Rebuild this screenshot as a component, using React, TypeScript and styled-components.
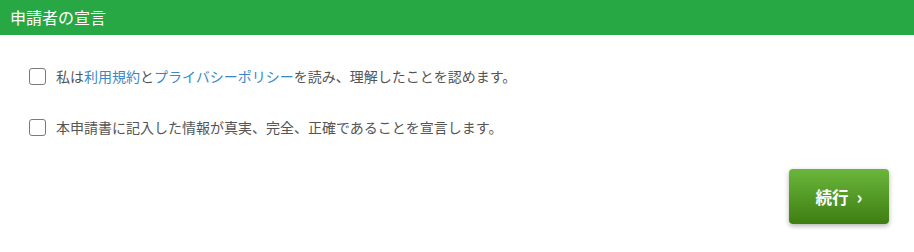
import React from "react";
import styled, { createGlobalStyle } from "styled-components";

const Global = createGlobalStyle`
  html, body { margin: 0; padding: 0; background: #fff; }
  body { font-family: "Noto Sans CJK JP", "Noto Sans", sans-serif; }
`;

const Panel = styled.section`
  width: 914px;
  height: 252px;
  display: flex;
  flex-direction: column;
  background: #fff;
`;

const Header = styled.header`
  height: 35px;
  background: #28a745;
  color: #fff;
  font-size: 16px;
  line-height: 35px;
  padding: 0 10px;
  box-sizing: border-box;
`;

const Body = styled.div`
  display: flex;
  flex-direction: column;
  padding: 24px 29px 0;
  gap: 17px;
`;

const Row = styled.label`
  display: flex;
  align-items: center;
  gap: 10px;
  height: 34px;
  font-size: 14px;
  color: #555;
  cursor: pointer;
`;

const Box = styled.span`
  width: 15px;
  height: 15px;
  border: 1px solid #7a7a7a;
  border-radius: 3px;
  background: #fff;
  flex: none;
`;

const Link = styled.a`
  color: #3a87c8;
  text-decoration: none;
`;

const Footer = styled.div`
  display: flex;
  justify-content: flex-end;
  padding: 25px 25px 0 0;
`;

const Button = styled.button`
  width: 100px;
  height: 55px;
  border: none;
  border-radius: 4px;
  background: linear-gradient(to bottom, #6ab63c, #3e7e12);
  box-shadow: 0 2px 5px rgba(0, 0, 0, 0.3);
  color: #fff;
  font-family: "Noto Sans CJK JP", "Noto Sans", sans-serif;
  font-weight: 700;
  font-size: 16.5px;
  display: flex;
  align-items: center;
  justify-content: center;
  gap: 8px;
  cursor: pointer;
`;

const Chevron = styled.span`
  font-size: 18px;
  line-height: 1;
  margin-top: -2px;
`;

export default function App() {
  return (
    <Panel>
      <Global />
      <Header>申請者の宣言</Header>
      <Body>
        <Row>
          <Box />
          <span>
            私は<Link href="#">利用規約</Link>と<Link href="#">プライバシーポリシー</Link>を読み、理解したことを認めます。
          </span>
        </Row>
        <Row>
          <Box />
          <span>本申請書に記入した情報が真実、完全、正確であることを宣言します。</span>
        </Row>
      </Body>
      <Footer>
        <Button>
          続行<Chevron>›</Chevron>
        </Button>
      </Footer>
    </Panel>
  );
}
